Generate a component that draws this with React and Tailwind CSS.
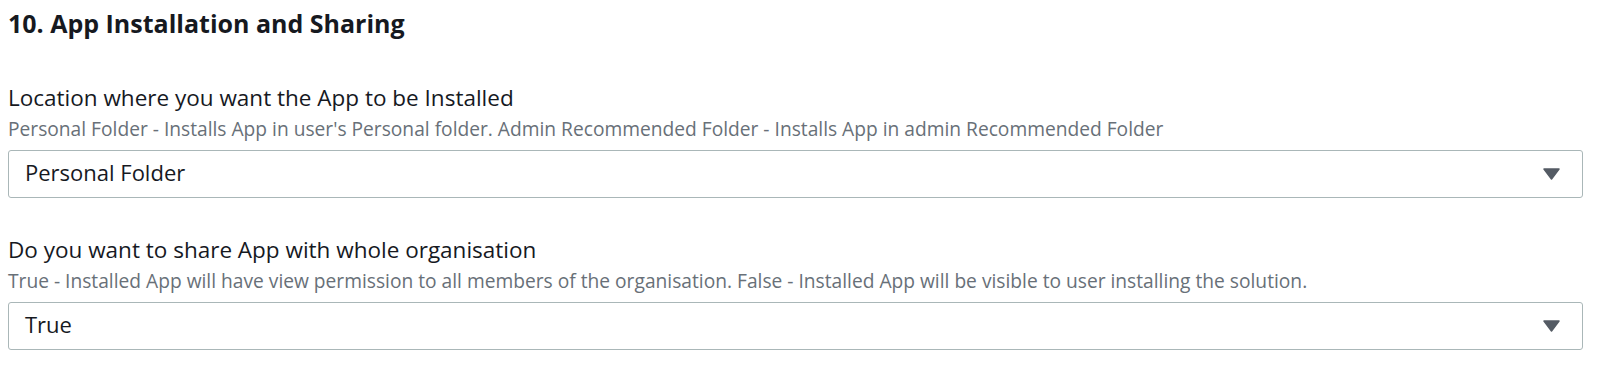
import React from "react";

const fields = [
  {
    label: "Location where you want the App to be Installed",
    hint: "Personal Folder - Installs App in user's Personal folder. Admin Recommended Folder - Installs App in admin Recommended Folder",
    value: "Personal Folder",
  },
  {
    label: "Do you want to share App with whole organisation",
    hint: "True - Installed App will have view permission to all members of the organisation. False - Installed App will be visible to user installing the solution.",
    value: "True",
  },
];

const Caret = () => (
  <svg width="17" height="12" viewBox="0 0 17 12" className="shrink-0">
    <path d="M1 1 L16 1 L8.5 11 Z" fill="#545b64" stroke="#545b64" strokeWidth="1.5" strokeLinejoin="round" />
  </svg>
);

const App = () => {
  return (
    <div className="w-[1600px] h-[370px] bg-white font-['Open_Sans',sans-serif] text-[#16191f] overflow-hidden">
      <div className="pl-2 pr-[17px] pt-[6px]">
        <h2 className="text-[25px] font-bold leading-[34px]">10. App Installation and Sharing</h2>

        <div className="mt-[44px] flex flex-col gap-[38px]">
          {fields.map((f) => (
            <div key={f.label}>
              <p className="text-[22.5px] leading-[28px]">{f.label}</p>
              <p className="text-[19.2px] leading-[24px] text-[#687078] mt-[5px]">{f.hint}</p>
              <div className="mt-[9px] h-[48px] border border-[#aab7b8] rounded-[3px] flex items-center justify-between pl-4 pr-[22px]">
                <span className="text-[22px] leading-[28px] pb-[5px]">{f.value}</span>
                <Caret />
              </div>
            </div>
          ))}
        </div>
      </div>
    </div>
  );
};

export default App;
